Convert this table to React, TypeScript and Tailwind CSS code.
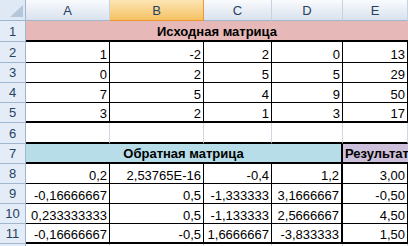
import React from 'react';

const COLS = 'grid grid-cols-[26px_84px_94px_68px_71px_65px_200px]';

const RowHead: React.FC<{ n?: number; h: string }> = ({ n, h }) => (
  <div className={`${h} flex items-center justify-center bg-[#e4ecf7] border-r border-b border-[#9eb6ce] text-[13px] text-[#27415f]`}>
    {n}
  </div>
);

const Num: React.FC<{ v: string; cls: string }> = ({ v, cls }) => (
  <div className={`flex items-end justify-end pr-[2px] pb-[1px] bg-white ${cls}`}>{v}</div>
);

const source = [
  ['1', '-2', '2', '0', '13'],
  ['0', '2', '5', '5', '29'],
  ['7', '5', '4', '9', '50'],
  ['3', '2', '1', '3', '17'],
];

const inverse = [
  ['0,2', '2,53765E-16', '-0,4', '1,2', '3,00'],
  ['-0,16666667', '0,5', '-1,333333', '3,1666667', '-0,50'],
  ['0,233333333', '0,5', '-1,133333', '2,5666667', '4,50'],
  ['-0,16666667', '-0,5', '1,6666667', '-3,833333', '1,50'],
];

const App: React.FC = () => {
  return (
    <div className="w-[408px] h-[246px] overflow-hidden bg-white text-[13px] text-black font-['Liberation_Sans',Arial,sans-serif] leading-none">
      <div className="w-[608px]">
        {/* column headers */}
        <div className={`${COLS} h-[21px]`}>
          <div className="relative bg-[#dfe9f5] border-r border-b border-[#9eb6ce]">
            <svg className="absolute right-[2px] bottom-[3px]" width="13" height="12" viewBox="0 0 13 12">
              <polygon points="13,0 13,12 0,12" fill="#b4c6da" />
            </svg>
          </div>
          {['A', 'B', 'C', 'D', 'E', ''].map((c, i) =>
            c === 'B' ? (
              <div key={i} className="flex items-center justify-center bg-gradient-to-b from-[#fce5b3] to-[#f5c262] border-r border-b border-[#f29436] text-[#27415f]">
                {c}
              </div>
            ) : (
              <div key={i} className="flex items-center justify-center bg-gradient-to-b from-[#f9fbfd] to-[#d9e2ee] border-r border-b border-r-[#c5d2e0] border-b-[#9eb6ce] text-[#27415f]">
                {c}
              </div>
            )
          )}
        </div>

        {/* row 1 */}
        <div className={`${COLS} h-[21px]`}>
          <RowHead n={1} h="h-[21px]" />
          <div className="col-span-5 flex items-end justify-center pb-[2px] bg-[#e6b8b7] border-b-2 border-black font-bold">
            Исходная матрица
          </div>
          <div className="border-r border-b border-[#d0d7e5]" />
        </div>

        {/* rows 2-5 */}
        {source.map((row, i) => {
          const h = i === 0 ? 'h-[21px]' : 'h-[20px]';
          const bottom = i === 3 ? 'border-b-2' : 'border-b';
          return (
            <div key={i} className={`${COLS} ${h}`}>
              <RowHead n={i + 2} h={h} />
              {row.map((v, j) => (
                <Num key={j} v={v} cls={`border-r ${bottom} border-black`} />
              ))}
              <div className="border-r border-b border-[#d0d7e5]" />
            </div>
          );
        })}

        {/* row 6 */}
        <div className={`${COLS} h-[21px]`}>
          <RowHead n={6} h="h-[21px]" />
          {[0, 1, 2, 3, 4].map(j => (
            <div key={j} className="border-r border-r-[#d0d7e5] border-b-2 border-b-black" />
          ))}
          <div className="border-r border-b border-[#d0d7e5]" />
        </div>

        {/* row 7 */}
        <div className={`${COLS} h-[20px]`}>
          <RowHead n={7} h="h-[20px]" />
          <div className="col-span-4 flex items-end justify-center pb-[2px] bg-[#b7dee8] border-r-2 border-b-2 border-black font-bold">
            Обратная матрица
          </div>
          <div className="relative flex items-end pl-[2px] pb-[2px] bg-[#ccc0da] border-b-2 border-black font-bold">
            <span className="whitespace-nowrap">Результат</span>
          </div>
          <div className="border-r border-b border-[#d0d7e5]" />
        </div>

        {/* rows 8-11 */}
        {inverse.map((row, i) => {
          const bottom = i === 3 ? 'border-b-2' : 'border-b';
          return (
            <div key={i} className={`${COLS} h-[20px]`}>
              <RowHead n={i + 8} h="h-[20px]" />
              {row.map((v, j) => (
                <Num key={j} v={v} cls={`${j === 3 ? 'border-r-2' : 'border-r'} ${bottom} border-black`} />
              ))}
              <div className="border-r border-b border-[#d0d7e5]" />
            </div>
          );
        })}

        {/* row 12, only its top edge is in view */}
        <div className={`${COLS} h-[20px]`}>
          <RowHead h="h-[20px]" />
          {[0, 1, 2, 3, 4, 5].map(j => (
            <div key={j} className="border-r border-b border-[#d0d7e5]" />
          ))}
        </div>
      </div>
    </div>
  );
};

export default App;
